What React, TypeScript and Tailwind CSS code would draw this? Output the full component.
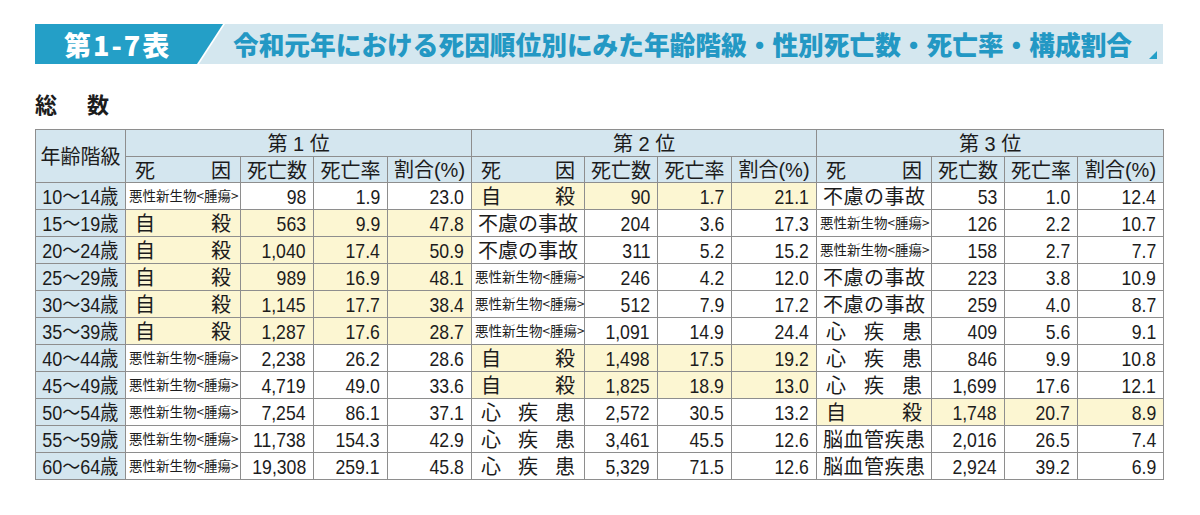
const widths = [
  "w-[90px]", "w-[115px]", "w-[73px]", "w-[74px]", "w-[84px]",
  "w-[113px]", "w-[73px]", "w-[74px]", "w-[85px]",
  "w-[115px]", "w-[73px]", "w-[73px]", "w-[86px]",
];

type Entry = [string, string, string, string];

const G = "悪性";

const rows: { age: string; ranks: Entry[] }[] = [
  { age: "10～14歳", ranks: [[G, "98", "1.9", "23.0"], ["自殺", "90", "1.7", "21.1"], ["不慮の事故", "53", "1.0", "12.4"]] },
  { age: "15～19歳", ranks: [["自殺", "563", "9.9", "47.8"], ["不慮の事故", "204", "3.6", "17.3"], [G, "126", "2.2", "10.7"]] },
  { age: "20～24歳", ranks: [["自殺", "1,040", "17.4", "50.9"], ["不慮の事故", "311", "5.2", "15.2"], [G, "158", "2.7", "7.7"]] },
  { age: "25～29歳", ranks: [["自殺", "989", "16.9", "48.1"], [G, "246", "4.2", "12.0"], ["不慮の事故", "223", "3.8", "10.9"]] },
  { age: "30～34歳", ranks: [["自殺", "1,145", "17.7", "38.4"], [G, "512", "7.9", "17.2"], ["不慮の事故", "259", "4.0", "8.7"]] },
  { age: "35～39歳", ranks: [["自殺", "1,287", "17.6", "28.7"], [G, "1,091", "14.9", "24.4"], ["心疾患", "409", "5.6", "9.1"]] },
  { age: "40～44歳", ranks: [[G, "2,238", "26.2", "28.6"], ["自殺", "1,498", "17.5", "19.2"], ["心疾患", "846", "9.9", "10.8"]] },
  { age: "45～49歳", ranks: [[G, "4,719", "49.0", "33.6"], ["自殺", "1,825", "18.9", "13.0"], ["心疾患", "1,699", "17.6", "12.1"]] },
  { age: "50～54歳", ranks: [[G, "7,254", "86.1", "37.1"], ["心疾患", "2,572", "30.5", "13.2"], ["自殺", "1,748", "20.7", "8.9"]] },
  { age: "55～59歳", ranks: [[G, "11,738", "154.3", "42.9"], ["心疾患", "3,461", "45.5", "12.6"], ["脳血管疾患", "2,016", "26.5", "7.4"]] },
  { age: "60～64歳", ranks: [[G, "19,308", "259.1", "45.8"], ["心疾患", "5,329", "71.5", "12.6"], ["脳血管疾患", "2,924", "39.2", "6.9"]] },
];

const cell = "border border-[#8e8e8e] p-0 h-[27px] leading-none";
const jp = "[font-family:'Noto_Sans_CJK_JP',sans-serif]";
const num = "[font-family:'Liberation_Sans',sans-serif]";

function Spread({ text, pad }: { text: string; pad: string }) {
  return (
    <div className={`flex justify-between ${pad}`}>
      {text.split("").map((ch, i) => (
        <span key={i}>{ch}</span>
      ))}
    </div>
  );
}

// digits in the print are a condensed face, so squeeze them from the right edge
function Num({ v }: { v: string }) {
  return <span className="inline-block scale-x-[0.84] origin-right">{v}</span>;
}

function RankCells({ e }: { e: Entry }) {
  const [cause, count, rate, pct] = e;
  const bg = cause === "自殺" ? "bg-[#fcf6d2]" : "bg-white";
  const n = `${cell} ${bg} ${num} text-right pr-[7px] text-[21px] whitespace-nowrap`;
  return (
    <>
      <td className={`${cell} ${bg} ${jp}`}>
        {cause === G ? (
          <div className="pl-[3px] text-[13.5px] whitespace-nowrap">悪性新生物&lt;腫瘍&gt;</div>
        ) : (
          <div className="text-[20px]">
            <Spread text={cause} pad={cause.length >= 5 ? "px-[6px]" : "px-[9px]"} />
          </div>
        )}
      </td>
      <td className={n}><Num v={count} /></td>
      <td className={n}><Num v={rate} /></td>
      <td className={n}><Num v={pct} /></td>
    </>
  );
}

function RankHeader() {
  const h = "border border-[#8e8e8e] p-0 h-[26px] leading-none font-normal text-[20px]";
  return (
    <>
      <th className={`${h} ${jp}`}>
        <Spread text="死因" pad="px-[9px]" />
      </th>
      <th className={`${h} ${jp} text-center`}>死亡数</th>
      <th className={`${h} ${jp} text-center`}>死亡率</th>
      <th className={`${h} ${jp} text-center whitespace-nowrap`}>
        割合<span className="[font-family:'Liberation_Sans',sans-serif]">(%)</span>
      </th>
    </>
  );
}

export default function App() {
  return (
    <div className="w-[1200px] h-[515px] bg-white pt-[24px] pl-[35px] text-[#1c1c1c]">
      {/* title bar */}
      <div className={`flex w-[1128px] h-[40px] bg-[#d4e7ef] ${jp}`}>
        <div className="w-[190px] h-full bg-white [clip-path:polygon(0_0,100%_0,calc(100%-26px)_100%,0_100%)]">
          <div className="w-[188px] h-full bg-[#249fc7] [clip-path:polygon(0_0,100%_0,calc(100%-26px)_100%,0_100%)] flex items-center pl-[29px]">
            <span className="text-white font-black text-[27px] tracking-[2px] leading-none">第1-7表</span>
          </div>
        </div>
        <div className="flex items-center ml-[8px]">
          <span className="text-[#2398c4] font-black text-[25.7px] leading-none whitespace-nowrap">
            令和元年における死因順位別にみた年齢階級・性別死亡数・死亡率・構成割合
          </span>
        </div>
        <div className="ml-auto mr-[6px] mb-[5px] self-end">
          <svg width="8" height="8" viewBox="0 0 8 8">
            <polygon points="8,0 8,8 0,8" fill="#249fc7" />
          </svg>
        </div>
      </div>

      {/* section heading */}
      <div className={`mt-[27px] h-[24px] flex items-center gap-[30px] text-[22px] font-bold leading-none ${jp}`}>
        <span>総</span>
        <span>数</span>
      </div>

      {/* table */}
      <table className="mt-[14px] border-collapse table-fixed w-[1128px] border-[1.5px] border-[#7a7a7a]">
        <colgroup>
          {widths.map((w, i) => (
            <col key={i} className={w} />
          ))}
        </colgroup>
        <thead className="bg-[#d4e6ef]">
          <tr>
            <th rowSpan={2} className={`${cell} ${jp} font-normal text-[20px] text-center`}>年齢階級</th>
            {["1", "2", "3"].map((n) => (
              <th key={n} colSpan={4} className={`${cell} ${num} font-normal text-[20px] text-center`}>
                <span className={jp}>第</span> {n} <span className={jp}>位</span>
              </th>
            ))}
          </tr>
          <tr>
            {[0, 1, 2].map((k) => (
              <RankHeader key={k} />
            ))}
          </tr>
        </thead>
        <tbody>
          {rows.map((r) => (
            <tr key={r.age}>
              <td className={`${cell} bg-[#d4e6ef] text-center text-[20px] whitespace-nowrap ${num}`}>
                <span className="inline-block scale-x-[0.9]">
                  {r.age.slice(0, 2)}
                  <span className={jp}>～</span>
                  {r.age.slice(3, 5)}
                  <span className={jp}>歳</span>
                </span>
              </td>
              {r.ranks.map((e, i) => (
                <RankCells key={i} e={e} />
              ))}
            </tr>
          ))}
        </tbody>
      </table>
    </div>
  );
}
